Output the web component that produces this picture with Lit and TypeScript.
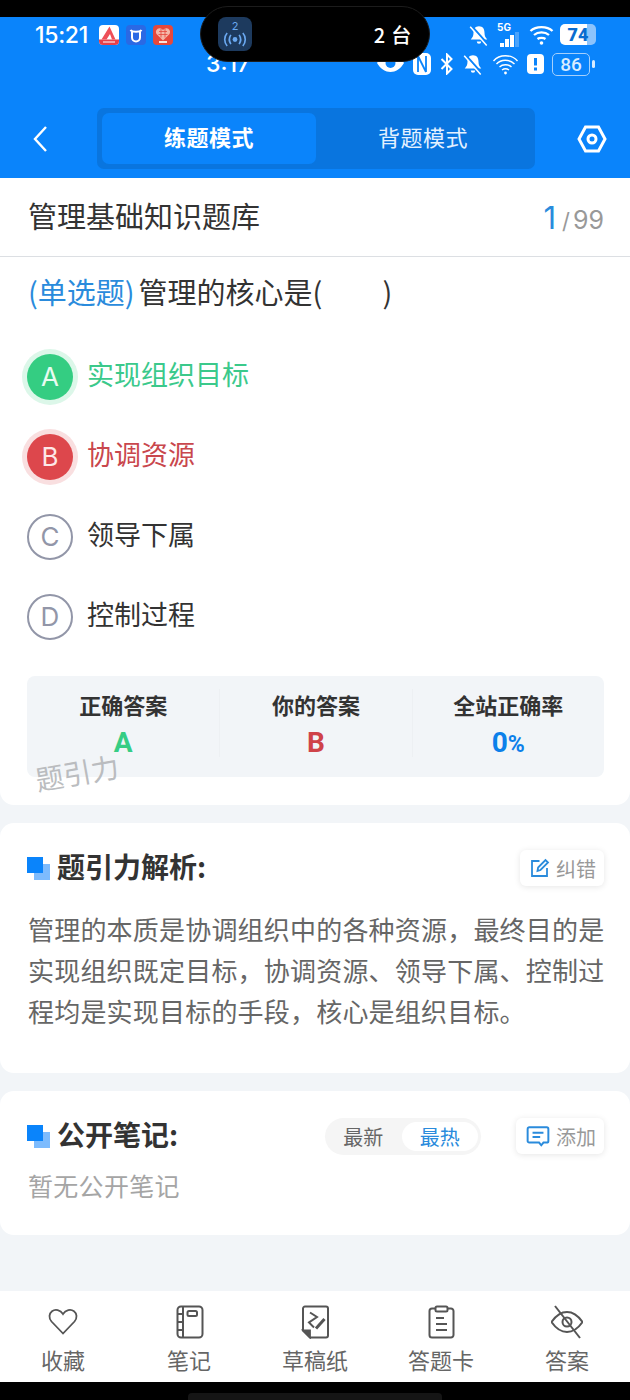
import { LitElement, html, css, svg } from "lit"
import { customElement } from "lit/decorators.js"

const options = [
   { key: "A", text: "实现组织目标", state: "right" },
   { key: "B", text: "协调资源", state: "wrong" },
   { key: "C", text: "领导下属", state: "" },
   { key: "D", text: "控制过程", state: "" },
]

const tabIcons = {
   heart: svg`<path d="M16 28.500 4.500 16.500C1.500 13 2 8.500 5 6.200c3.300-2.500 8.300-1.500 11 2.800 2.700-4.300 7.700-5.300 11-2.800 3 2.300 3.500 6.800.5 10.300Z"/>`,
   note: svg`<rect x="4.500" y="1.500" width="25" height="31" rx="3.500" stroke-width="2"/><path d="M10 1.500v31M4.500 9h5.500M4.500 17h5.500M4.500 25h5.500" stroke-width="2"/><rect x="14.500" y="6" width="9.500" height="5" rx="1.500" stroke-width="2"/>`,
   draft: svg`<path d="M6 1.500h21a2 2 0 0 1 2 2v27a2 2 0 0 1-2 2H11l-7-7V3.500a2 2 0 0 1 2-2Z" stroke-width="2"/><path d="M11 7.500l7 4.500-8 5.500 5 5" stroke-width="2"/><path d="M17 23.500l8.500-9.500" stroke-width="3"/><path d="M4 25.500h7v7Z" fill="#555"/>`,
   card: svg`<path d="M10 3.500H7a2.500 2.500 0 0 0-2.500 2.500v24A2.500 2.500 0 0 0 7 32.500h19a2.500 2.500 0 0 0 2.500-2.500V6A2.500 2.500 0 0 0 26 3.500h-3" stroke-width="2"/><rect x="10.500" y="1.500" width="12" height="5" rx="1.500" stroke-width="2"/><path d="M11 13h8M11 19h11M11 25h11" stroke-width="2"/>`,
   eye: svg`<path d="M.500 17C5 10.500 10 7 16 7s11 3.500 15.500 10C27 23.500 22 27 16 27S5 23.500 .500 17Z" stroke-width="2"/><circle cx="16" cy="17" r="4.500" stroke-width="2"/><path d="M4 1 29 33" stroke-width="2"/>`,
}

const tabs: [string, keyof typeof tabIcons][] = [
   ["收藏", "heart"],
   ["笔记", "note"],
   ["草稿纸", "draft"],
   ["答题卡", "card"],
   ["答案", "eye"],
]

const bell = svg`<path d="M10 2c3.500 0 5 2.500 5 6 0 3 1 4.500 2.500 6h-15C4 12.500 5 11 5 8c0-3.500 1.500-6 5-6ZM8 16h4a2 2 0 0 1-4 0Z"/><path d="M3 1.500 18 18.500" stroke="#0a84fb" stroke-width="2"/><path d="M2 2.500 17 19.500" stroke="#fff" stroke-width="1.400"/>`

@customElement("app-root")
export class AppRoot extends LitElement {
   renderStatus() {
      return html`
         <div class="status">
            <div class="status-left">
               <span class="clock">15:21</span>
               <svg class="app" viewBox="0 0 20 20"><rect width="20" height="20" rx="4" fill="#fff"/><path d="M0 14.500h20V16a4 4 0 0 1-4 4H4a4 4 0 0 1-4-4Z" fill="#e8404a"/><path d="M2.500 14.500 10.500 1.500 16.500 14.500h-3.500L11 9l-3.500 5.500Z" fill="#ee4f58"/><path d="M4 17h12" stroke="#fff" stroke-width="1"/></svg>
               <svg class="app" viewBox="0 0 20 20"><rect width="20" height="20" rx="4" fill="#2a69e4"/><path d="M6 6v6.500a4 4 0 0 0 8 0V6M4.500 5c1 1.500 2 1.800 5.500 1.800s4.500-.3 5.500-1.800" fill="none" stroke="#fff" stroke-width="2"/></svg>
               <svg class="app" viewBox="0 0 20 20"><rect width="20" height="20" rx="4" fill="#e5483c"/><path d="M10 15.500 3.500 9C1.800 6.200 4 2.800 7 3.200c1.500.2 2.500 1 3 2 .5-1 1.500-1.800 3-2 3-.4 5.200 3 3.500 5.800Z" fill="#f4b7a8"/><path d="M6 6.500h8M5.500 9.500h9M8 3.500v9M12 3.500v9" stroke="#e5483c" stroke-width=".8"/><rect x="6" y="16" width="8" height="2" fill="#fbe4da"/></svg>
            </div>
            <div class="status-right">
               <svg class="ico bell" viewBox="0 0 20 20" fill="#fff">${bell}</svg>
               <div class="net"><span>5G</span><i style="height:4px"></i><i style="height:8px"></i><i style="height:12px"></i><i class="off" style="height:15px"></i></div>
               <svg class="ico wifi" viewBox="0 0 25 22" fill="none" stroke="#fff" stroke-width="2.300"><path d="M1.500 7C7 1.800 18 1.800 23.500 7M5 11c4-3.500 11-3.500 15 0M8.500 15c2-1.500 6-1.500 8 0"/><circle cx="12.500" cy="19" r="1.800" fill="#fff" stroke="none"/></svg>
               <div class="bat"><b>74</b></div>
            </div>
         </div>
         <div class="status second">
            <span class="clock-back">3:17</span>
            <div class="status-right low">
               <svg class="ico eye" viewBox="0 0 27 24"><path d="M0 11c7-12 20-12 27 0-7 12-20 12-27 0Z" fill="#fff"/><circle cx="13.500" cy="11" r="5" fill="#0a84fb"/></svg>
               <svg class="ico nfc" viewBox="0 0 20 24"><rect x="1" y="1" width="18" height="22" rx="5" fill="#fff"/><path d="M6 4v16M14 4v16M6 4l8 16" stroke="#0a84fb" stroke-width="1.800" fill="none"/></svg>
               <svg class="ico bt" viewBox="0 0 14 22" fill="none" stroke="#fff" stroke-width="2"><path d="M1.500 6l10 10-4.500 4.500v-19L11.500 6l-10 10"/></svg>
               <svg class="ico bell" viewBox="0 0 20 20" fill="#fff">${bell}</svg>
               <svg class="ico hot" viewBox="0 0 27 24" fill="none" stroke="#fff" stroke-width="1.400"><path d="M1.500 9c6-7 18-7 24 0M4.500 12c4.500-5 13-5 18 0M7.500 15c3-3 9-3 12 0M10 18c2-1.500 5-1.500 7 0"/><circle cx="13.500" cy="21" r="1.400" fill="#fff" stroke="none"/></svg>
               <svg class="ico warn" viewBox="0 0 17 22"><rect x="0" y="1" width="17" height="20" rx="4" fill="#fff"/><rect x="7" y="5" width="3" height="7.500" fill="#0a84fb"/><rect x="7" y="14.500" width="3" height="3" fill="#0a84fb"/></svg>
               <div class="bat outline"><b>86</b></div>
            </div>
         </div>
      `
   }

   render() {
      return html`
         <div class="notch"></div>
         <div class="island">
            <div class="cast">
               <span>2</span>
               <svg viewBox="0 0 26 16" fill="none" stroke="#6aa8f0" stroke-width="1.800"><circle cx="13" cy="8" r="2.600" fill="#6aa8f0" stroke="none"/><path d="M8.500 3c-2 3-2 7 0 10M17.500 3c2 3 2 7 0 10M4.500 1C1 5 1 11 4.500 15M21.500 1c3.500 4 3.500 10 0 14"/></svg>
            </div>
            <span class="island-text">2 台</span>
         </div>

         <header>
            ${this.renderStatus()}
            <nav>
               <svg class="back" viewBox="0 0 16 28" fill="none" stroke="#fff" stroke-width="2.400"><path d="M14 2 3 14l11 12"/></svg>
               <div class="mode">
                  <div class="mode-item on">练题模式</div>
                  <div class="mode-item">背题模式</div>
               </div>
               <svg class="gear" viewBox="0 0 30 28" fill="none" stroke="#fff" stroke-width="3"><path d="M8.500 2h13L28 14l-6.500 12h-13L2 14Z"/><circle cx="15" cy="14" r="4"/></svg>
            </nav>
         </header>

         <section class="card main">
            <div class="title-row">
               <span class="title">管理基础知识题库</span>
               <span class="count"><b>1</b><i>/</i><em>99</em></span>
            </div>
            <div class="question"><span>(单选题)</span>管理的核心是(<u></u>)</div>
            <div class="options">
               ${options.map(o => html`
                  <div class="option ${o.state}">
                     <span class="dot">${o.key}</span>
                     <span class="label">${o.text}</span>
                  </div>
               `)}
            </div>
            <div class="stats">
               <div class="stat"><h4>正确答案</h4><b class="green">A</b></div>
               <div class="stat"><h4>你的答案</h4><b class="red">B</b></div>
               <div class="stat"><h4>全站正确率</h4><b class="blue">0<small>%</small></b></div>
            </div>
            <div class="mark">题引力</div>
         </section>

         <section class="card analysis">
            <div class="head">
               <span class="squares"></span>
               <h3>题引力解析:</h3>
               <div class="chip">
                  <svg viewBox="0 0 20 20" fill="none" stroke="#2a8bdc" stroke-width="1.800"><path d="M10 3H2.500v15h15v-8"/><path d="M8 13l.6-3.500L16 2l2.500 2.500L11 12Z"/></svg>
                  纠错
               </div>
            </div>
            <p>管理的本质是协调组织中的各种资源，最终目的是实现组织既定目标，协调资源、领导下属、控制过程均是实现目标的手段，核心是组织目标。</p>
         </section>

         <section class="card notes">
            <div class="head">
               <span class="squares"></span>
               <h3>公开笔记:</h3>
               <div class="sort"><span>最新</span><span class="hot">最热</span></div>
               <div class="chip">
                  <svg viewBox="0 0 22 20" fill="none" stroke="#2a8bdc" stroke-width="1.800"><path d="M3 2h16a1.500 1.500 0 0 1 1.500 1.500v11A1.500 1.500 0 0 1 19 16h-3l-2 2.500-2-2.500H3a1.500 1.500 0 0 1-1.500-1.500v-11A1.500 1.500 0 0 1 3 2Z"/><path d="M6 7h10M6 11h7"/></svg>
                  添加
               </div>
            </div>
            <div class="empty">暂无公开笔记</div>
         </section>

         <div class="spacer"></div>

         <footer>
            ${tabs.map(([label, icon]) => html`
               <div class="tab">
                  <svg viewBox="0 0 32 34" fill="none" stroke="#555" stroke-width="1.800">${tabIcons[icon]}</svg>
                  <span>${label}</span>
               </div>
            `)}
         </footer>
         <div class="home"><i></i></div>
      `
   }

   static styles = css`
      :host {
         display: block;
         position: relative;
         width: 630px;
         height: 1400px;
         overflow: hidden;
         background: #f2f5f8;
         font-family: "Noto Sans CJK SC", "Noto Sans", sans-serif;
         color: #333;
      }
      .notch {
         height: 17px;
         background: #000;
      }
      .island {
         position: absolute;
         left: 200px;
         top: 6px;
         width: 230px;
         height: 56px;
         box-sizing: border-box;
         padding: 0 17px 0 17px;
         border-radius: 28px;
         background: #000;
         border: 1px solid #1c1c1c;
         display: flex;
         align-items: center;
         justify-content: space-between;
         z-index: 2;
      }
      .cast {
         width: 34px;
         height: 34px;
         border-radius: 8px;
         background: #1d3a5e;
         color: #6aa8f0;
         display: flex;
         flex-direction: column;
         align-items: center;
         justify-content: center;
         font: 11px/11px "Inter", sans-serif;
      }
      .cast svg {
         width: 24px;
         height: 15px;
      }
      .island-text {
         color: #fff;
         font-size: 20px;
         font-weight: 500;
         letter-spacing: .8px;
         white-space: nowrap;
      }
      header {
         height: 161px;
         background: #0a84fb;
         color: #fff;
      }
      .status {
         height: 35px;
         padding: 0 34px 0 35px;
         display: flex;
         align-items: center;
         justify-content: space-between;
      }
      .status.second {
         height: 24px;
      }
      .status-left {
         display: flex;
         align-items: center;
         gap: 7px;
      }
      .clock {
         font: 500 23px/28px "Inter", sans-serif;
         letter-spacing: -0.3px;
         margin-right: 4px;
      }
      .app {
         width: 20px;
         height: 20px;
      }
      .clock-back {
         font: 500 23px/24px "Inter", sans-serif;
         margin-left: 171px;
      }
      .status-right {
         display: flex;
         align-items: center;
         gap: 6px;
         margin-left: auto;
      }
      .ico {
         display: block;
      }
      .bell { width: 22px; height: 22px; }
      .wifi { width: 25px; height: 22px; }
      .eye { width: 27px; height: 24px; }
      .nfc { width: 20px; height: 24px; }
      .bt { width: 14px; height: 22px; }
      .hot { width: 27px; height: 24px; }
      .warn { width: 17px; height: 22px; }
      .net {
         position: relative;
         width: 23px;
         height: 24px;
         display: flex;
         align-items: flex-end;
         justify-content: flex-end;
         gap: 1px;
         margin-right: 4px;
      }
      .net span {
         position: absolute;
         left: 1px;
         top: -1px;
         font: 700 10px/11px "Inter", sans-serif;
      }
      .net i {
         width: 4px;
         background: #fff;
      }
      .net i.off {
         background: #4aa3fb;
      }
      .bat {
         width: 36px;
         height: 21px;
         border-radius: 5px;
         background: linear-gradient(90deg, #fff 0 74%, #8cc3fc 74%);
         color: #0a6cd0;
         display: flex;
         align-items: center;
         justify-content: center;
         font: 700 18px/21px "Roboto", sans-serif;
      }
      .bat.outline {
         background: none;
         border: 1.500px solid #a5d0fc;
         color: #d8ecff;
         box-sizing: border-box;
         width: 38px;
         height: 23px;
         font-size: 19px;
         position: relative;
      }
      .bat.outline b {
         font-weight: 500;
      }
      .bat.outline::after {
         content: "";
         position: absolute;
         right: -6px;
         top: 6px;
         width: 3px;
         height: 8px;
         border-radius: 2px;
         background: #d8ecff;
      }
      .status-right.low {
         gap: 8px;
         margin-right: 6px;
      }
      nav {
         height: 61px;
         margin-top: 32px;
         display: flex;
         align-items: center;
         padding-left: 32px;
      }
      .back {
         width: 16px;
         height: 28px;
      }
      .mode {
         margin-left: 49px;
         width: 438px;
         height: 61px;
         box-sizing: border-box;
         padding: 5px;
         background: #0975df;
         border-radius: 7px;
         display: flex;
      }
      .mode-item {
         flex: 1;
         display: flex;
         align-items: center;
         justify-content: center;
         font-size: 22px;
         letter-spacing: .5px;
         padding-bottom: 6px;
         color: #e4f1ff;
         border-radius: 7px;
      }
      .mode-item.on {
         flex: none;
         width: 214px;
         background: #0a84fb;
         color: #fff;
         font-weight: 700;
      }
      .gear {
         width: 30px;
         height: 28px;
         margin-left: 42px;
      }
      .card {
         background: #fff;
         position: relative;
      }
      .main {
         height: 627px;
         border-radius: 0 0 14px 14px;
      }
      .title-row {
         height: 79px;
         box-sizing: border-box;
         padding: 0 26px 4px 28px;
         border-bottom: 1px solid #dcdfe3;
         display: flex;
         align-items: center;
         justify-content: space-between;
      }
      .title {
         font-size: 29px;
      }
      .count {
         display: flex;
         align-items: baseline;
         font-family: "Inter", sans-serif;
         color: #999;
         margin-top: 4px;
      }
      .count b {
         font-size: 31px;
         font-weight: 400;
         color: #2a8bdc;
         margin-right: 6px;
      }
      .count i {
         font-size: 22px;
         font-style: normal;
         margin-right: 3px;
      }
      .count em {
         font-size: 25px;
         font-style: normal;
      }
      .question {
         padding: 14px 28px 0;
         font-size: 29px;
         line-height: 40px;
         white-space: nowrap;
      }
      .question span {
         color: #2a8bdc;
         margin-right: 4px;
      }
      .question u {
         display: inline-block;
         width: 60px;
      }
      .options {
         margin-top: 43px;
         padding-left: 27px;
         display: flex;
         flex-direction: column;
         gap: 34px;
      }
      .option {
         height: 46px;
         display: flex;
         align-items: center;
         gap: 14px;
         font-size: 27px;
      }
      .label {
         padding-bottom: 8px;
      }
      .dot {
         width: 46px;
         height: 46px;
         box-sizing: border-box;
         border-radius: 50%;
         border: 2px solid #9296a8;
         color: #9296a8;
         display: flex;
         align-items: center;
         justify-content: center;
         font: 400 26px/1 "Inter", sans-serif;
      }
      .option.right {
         color: #3bc98b;
      }
      .option.right .dot {
         border: 0;
         background: #34cd82;
         color: #e8fbf1;
         box-shadow: 0 0 0 5px #dcf7e9;
      }
      .option.wrong {
         color: #c9474d;
      }
      .option.wrong .dot {
         border: 0;
         background: #dd474c;
         color: #fde8e8;
         box-shadow: 0 0 0 5px #f9dfe0;
      }
      .stats {
         margin: 36px 26px 0 27px;
         height: 101px;
         box-sizing: border-box;
         padding-top: 13px;
         background: #f2f5f8;
         border-radius: 8px;
         display: grid;
         grid-template-columns: repeat(3, 1fr);
      }
      .stat {
         display: flex;
         flex-direction: column;
         align-items: center;
         height: 68px;
      }
      .stat + .stat {
         border-left: 1px solid #edf0f3;
      }
      .stat h4 {
         margin: 0;
         font-size: 22px;
         line-height: 30px;
         font-weight: 700;
         color: #333;
      }
      .stat b {
         margin-top: 7px;
         font: 700 28px/34px "Roboto", sans-serif;
      }
      .stat small {
         font-size: 23px;
      }
      .green { color: #36cd84; }
      .red { color: #cf4349; }
      .blue { color: #0c80ea; }
      .mark {
         position: absolute;
         left: 35px;
         top: 578px;
         font-size: 28px;
         line-height: 32px;
         color: #b4b6b9;
         transform: rotate(-10deg);
         opacity: .9;
      }
      .analysis {
         margin-top: 18px;
         height: 250px;
         border-radius: 14px;
         box-sizing: border-box;
         padding: 26px 26px 0 27px;
      }
      .notes {
         margin-top: 18px;
         height: 144px;
         border-radius: 14px;
         box-sizing: border-box;
         padding: 26px 26px 0 27px;
      }
      .head {
         height: 38px;
         display: flex;
         align-items: center;
      }
      .squares {
         position: relative;
         width: 23px;
         height: 23px;
         margin-right: 7px;
      }
      .squares::before, .squares::after {
         content: "";
         position: absolute;
         width: 16px;
         height: 16px;
      }
      .squares::after {
         left: 7px;
         top: 7px;
         background: #7dbbfd;
      }
      .squares::before {
         left: 0;
         top: 0;
         background: #0a84fb;
         z-index: 1;
      }
      .head h3 {
         margin: -4px 0 0;
         font-size: 28px;
         font-weight: 700;
         color: #333;
      }
      .chip {
         margin-left: auto;
         height: 36px;
         padding: 0 8px 0 9px;
         background: #fff;
         border-radius: 6px;
         box-shadow: 0 1px 6px rgba(0, 0, 0, .1);
         display: flex;
         align-items: center;
         gap: 6px;
         font-size: 20px;
         color: #999;
      }
      .chip svg {
         width: 21px;
         height: 20px;
      }
      .notes .chip {
         padding-left: 10px;
      }
      .notes .chip svg {
         width: 24px;
         height: 22px;
      }
      .analysis p {
         margin: 21px -6px 0 1px;
         font-size: 26px;
         line-height: 41px;
         letter-spacing: .2px;
         color: #666;
      }
      .sort {
         margin-left: auto;
         margin-right: 35px;
         width: 156px;
         height: 37px;
         box-sizing: border-box;
         padding: 4px 3px 4px 0;
         border-radius: 19px;
         background: #f5f5f5;
         display: flex;
         align-items: center;
         font-size: 20px;
         color: #666;
      }
      .sort + .chip {
         margin-left: 0;
      }
      .sort span {
         flex: 1;
         text-align: center;
      }
      .sort .hot {
         height: 29px;
         line-height: 29px;
         border-radius: 15px;
         background: #fff;
         color: #2a8bdc;
      }
      .empty {
         margin-top: 12px;
         font-size: 25px;
         line-height: 36px;
         letter-spacing: .3px;
         color: #a5a5a5;
         padding-left: 1px;
      }
      .spacer {
         height: 56px;
      }
      footer {
         height: 91px;
         background: #fff;
         display: grid;
         grid-template-columns: repeat(5, 1fr);
         box-sizing: border-box;
         padding: 14px 0 0;
      }
      .tab {
         display: flex;
         flex-direction: column;
         align-items: center;
         gap: 6px;
         font-size: 22px;
         line-height: 28px;
         color: #666;
      }
      .tab svg {
         width: 32px;
         height: 34px;
      }
      .home {
         height: 18px;
         background: #000;
         display: flex;
         justify-content: center;
         align-items: flex-end;
      }
      .home i {
         width: 254px;
         height: 7px;
         border-radius: 4px 4px 0 0;
         background: #151515;
      }
   `
}

declare global {
   interface HTMLElementTagNameMap {
      "app-root": AppRoot
   }
}
